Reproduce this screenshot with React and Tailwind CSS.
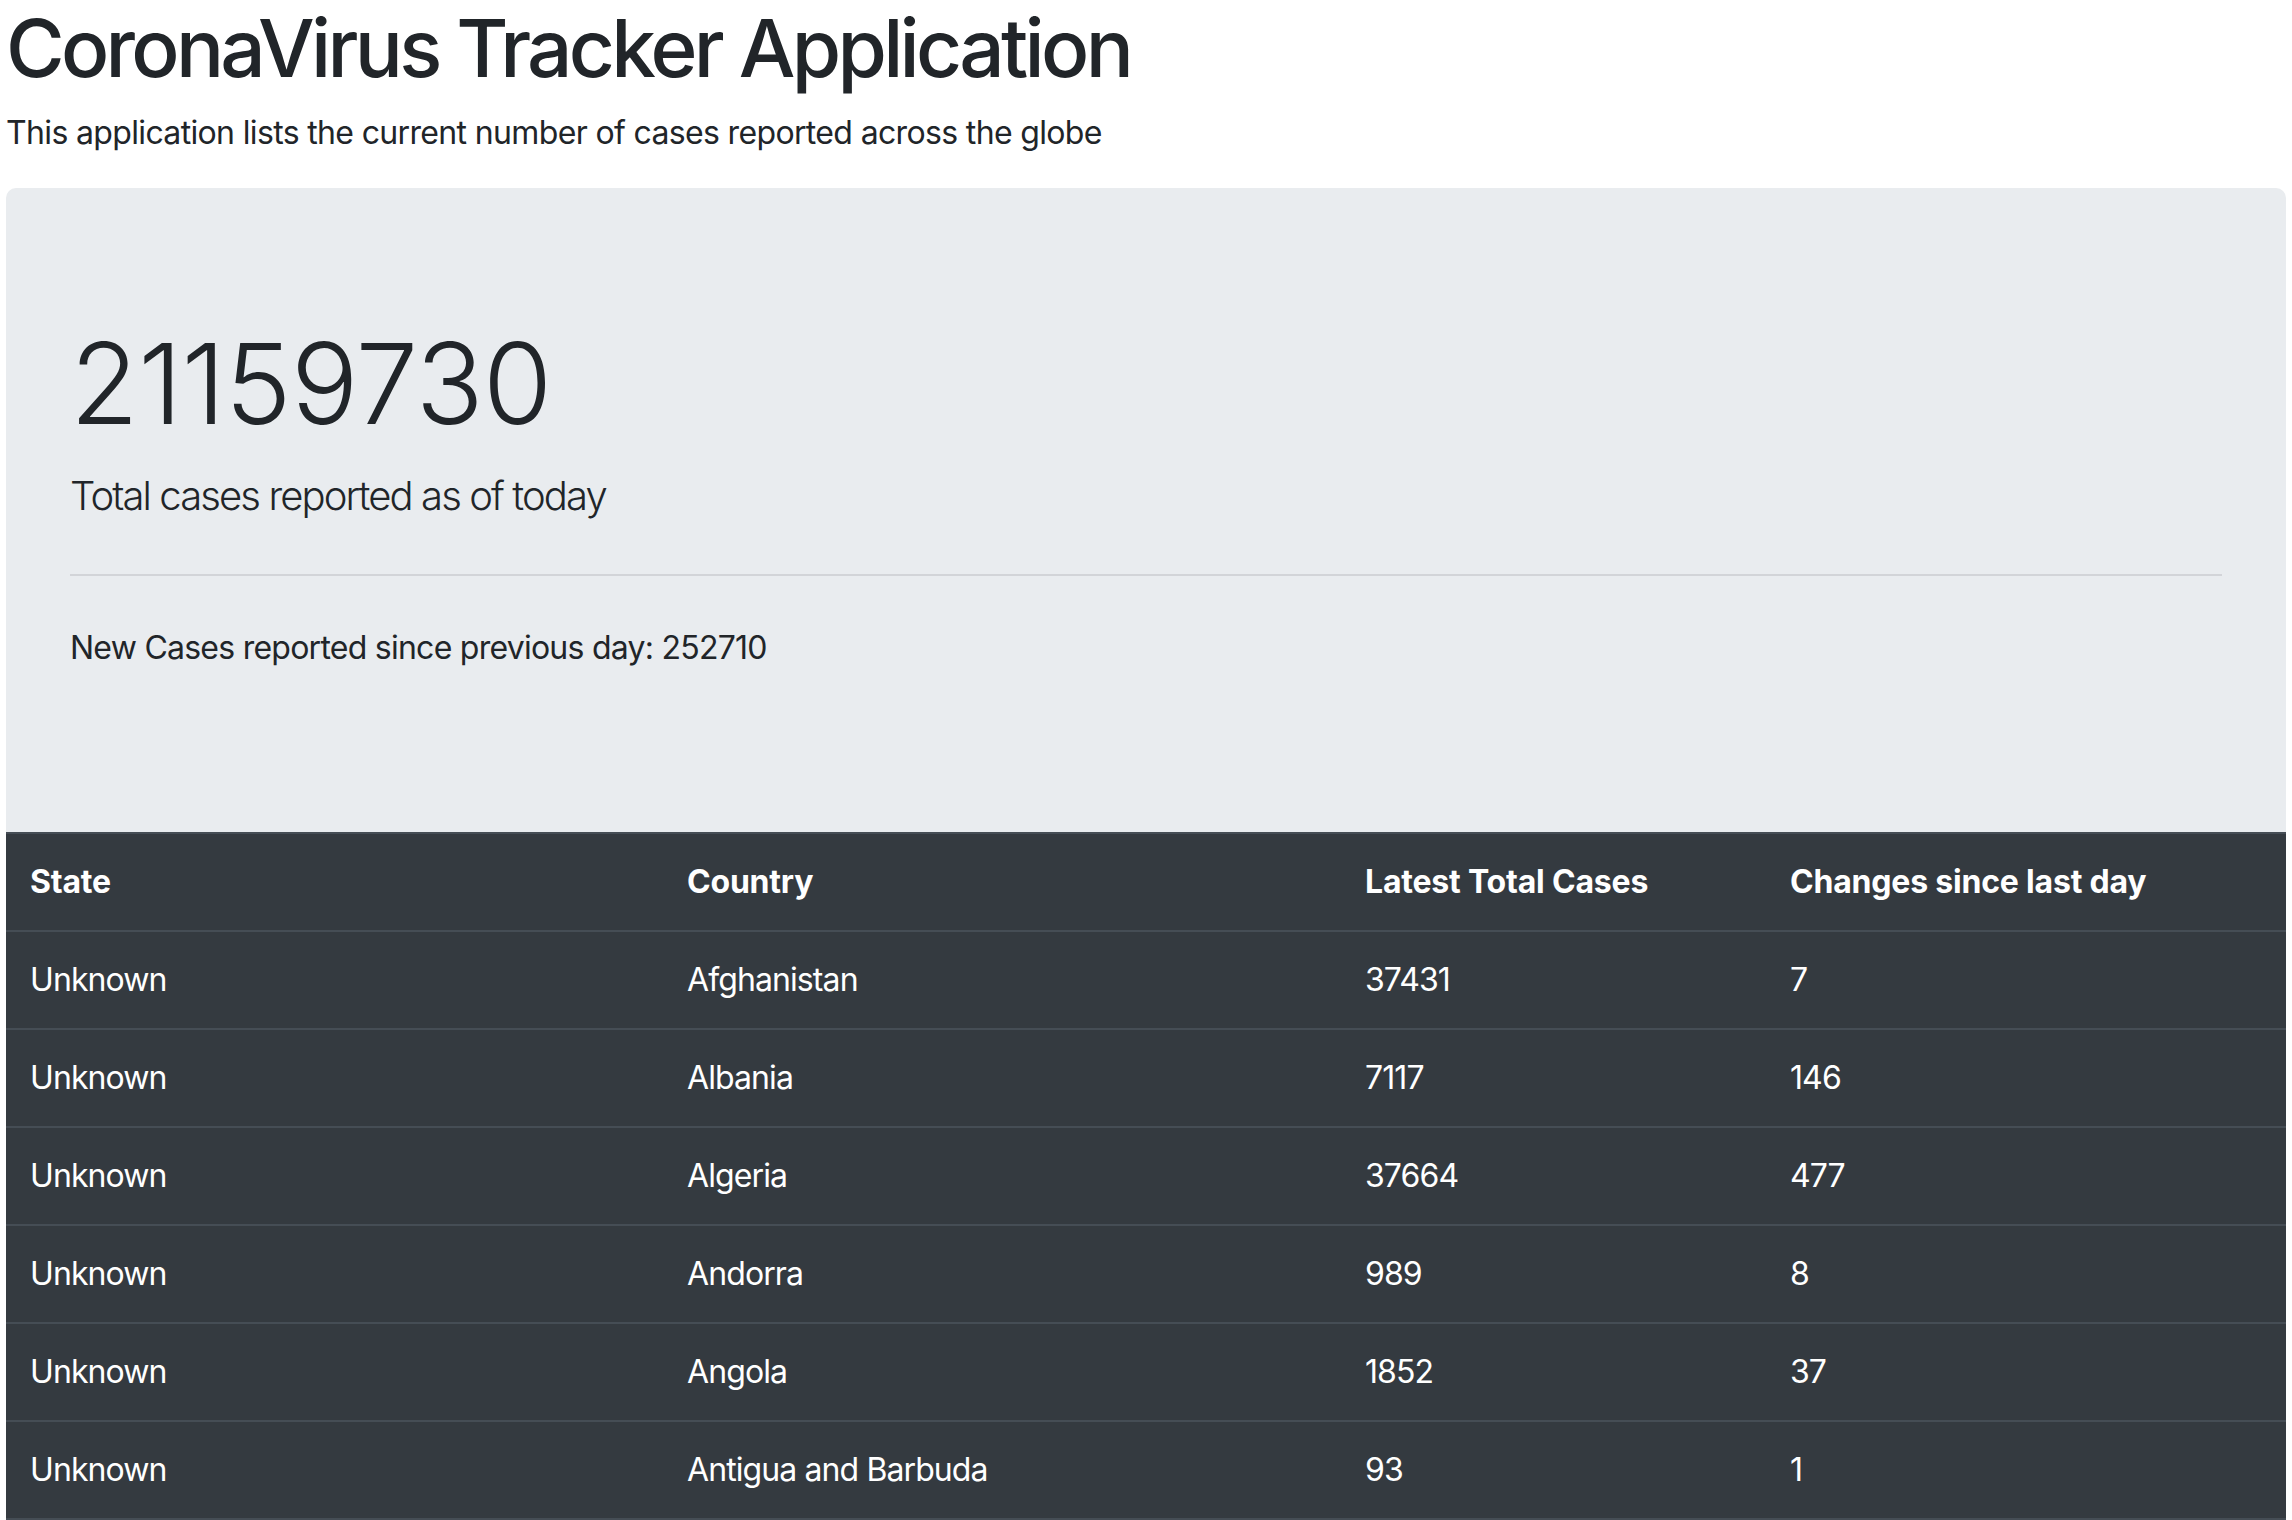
import React from "react";

const rows = [
  ["Unknown", "Afghanistan", "37431", "7"],
  ["Unknown", "Albania", "7117", "146"],
  ["Unknown", "Algeria", "37664", "477"],
  ["Unknown", "Andorra", "989", "8"],
  ["Unknown", "Angola", "1852", "37"],
  ["Unknown", "Antigua and Barbuda", "93", "1"],
];

export default function App() {
  return (
    <div
      className="min-h-screen bg-white px-[6px] text-[#212529]"
      style={{ fontFamily: 'Inter, "Liberation Sans", sans-serif' }}
    >
      <h1 className="m-0 text-[80px] font-medium leading-[96px] tracking-[-3.7px]">
        CoronaVirus Tracker Application
      </h1>
      <p className="mt-[13px] mb-[31px] text-[32px] leading-[48px] tracking-[-0.65px]">
        This application lists the current number of cases reported across the globe
      </p>
      <div className="rounded-t-[10px] bg-[#e9ecef] px-[64px] pt-[128px] pb-[128px]">
        <div className="mb-[16px] text-[112px] font-light leading-[134px] tracking-[-0.6px]">
          21159730
        </div>
        <p className="mb-[48px] text-[40px] font-light leading-[60px] tracking-[-1.9px]">
          Total cases reported as of today
        </p>
        <div className="mb-[48px] h-[2px] bg-[#d2d4d8]" />
        <p className="mb-[32px] text-[32px] leading-[48px] tracking-[-0.75px]">
          New Cases reported since previous day: 252710
        </p>
      </div>
      <table className="w-full table-fixed border-collapse border-b-2 border-[#454d55] bg-[#343a40] text-[32px] leading-[48px] text-white">
        <colgroup>
          <col className="w-[657px]" />
          <col className="w-[678px]" />
          <col className="w-[425px]" />
          <col />
        </colgroup>
        <thead>
          <tr className="border-t-2 border-[#454d55]">
            <th className="px-[24px] py-[24px] text-left font-bold tracking-[-0.2px]">State</th>
            <th className="px-[24px] py-[24px] text-left font-bold tracking-[-0.2px]">Country</th>
            <th className="px-[24px] py-[24px] text-left font-bold tracking-[-0.2px]">Latest Total Cases</th>
            <th className="px-[24px] py-[24px] text-left font-bold tracking-[-0.2px]">Changes since last day</th>
          </tr>
        </thead>
        <tbody>
          {rows.map((r, i) => (
            <tr key={i} className="border-t-2 border-[#454d55]">
              {r.map((c, j) => (
                <td key={j} className="px-[24px] py-[24px] font-normal tracking-[-0.9px]">
                  {c}
                </td>
              ))}
            </tr>
          ))}
        </tbody>
      </table>
    </div>
  );
}
